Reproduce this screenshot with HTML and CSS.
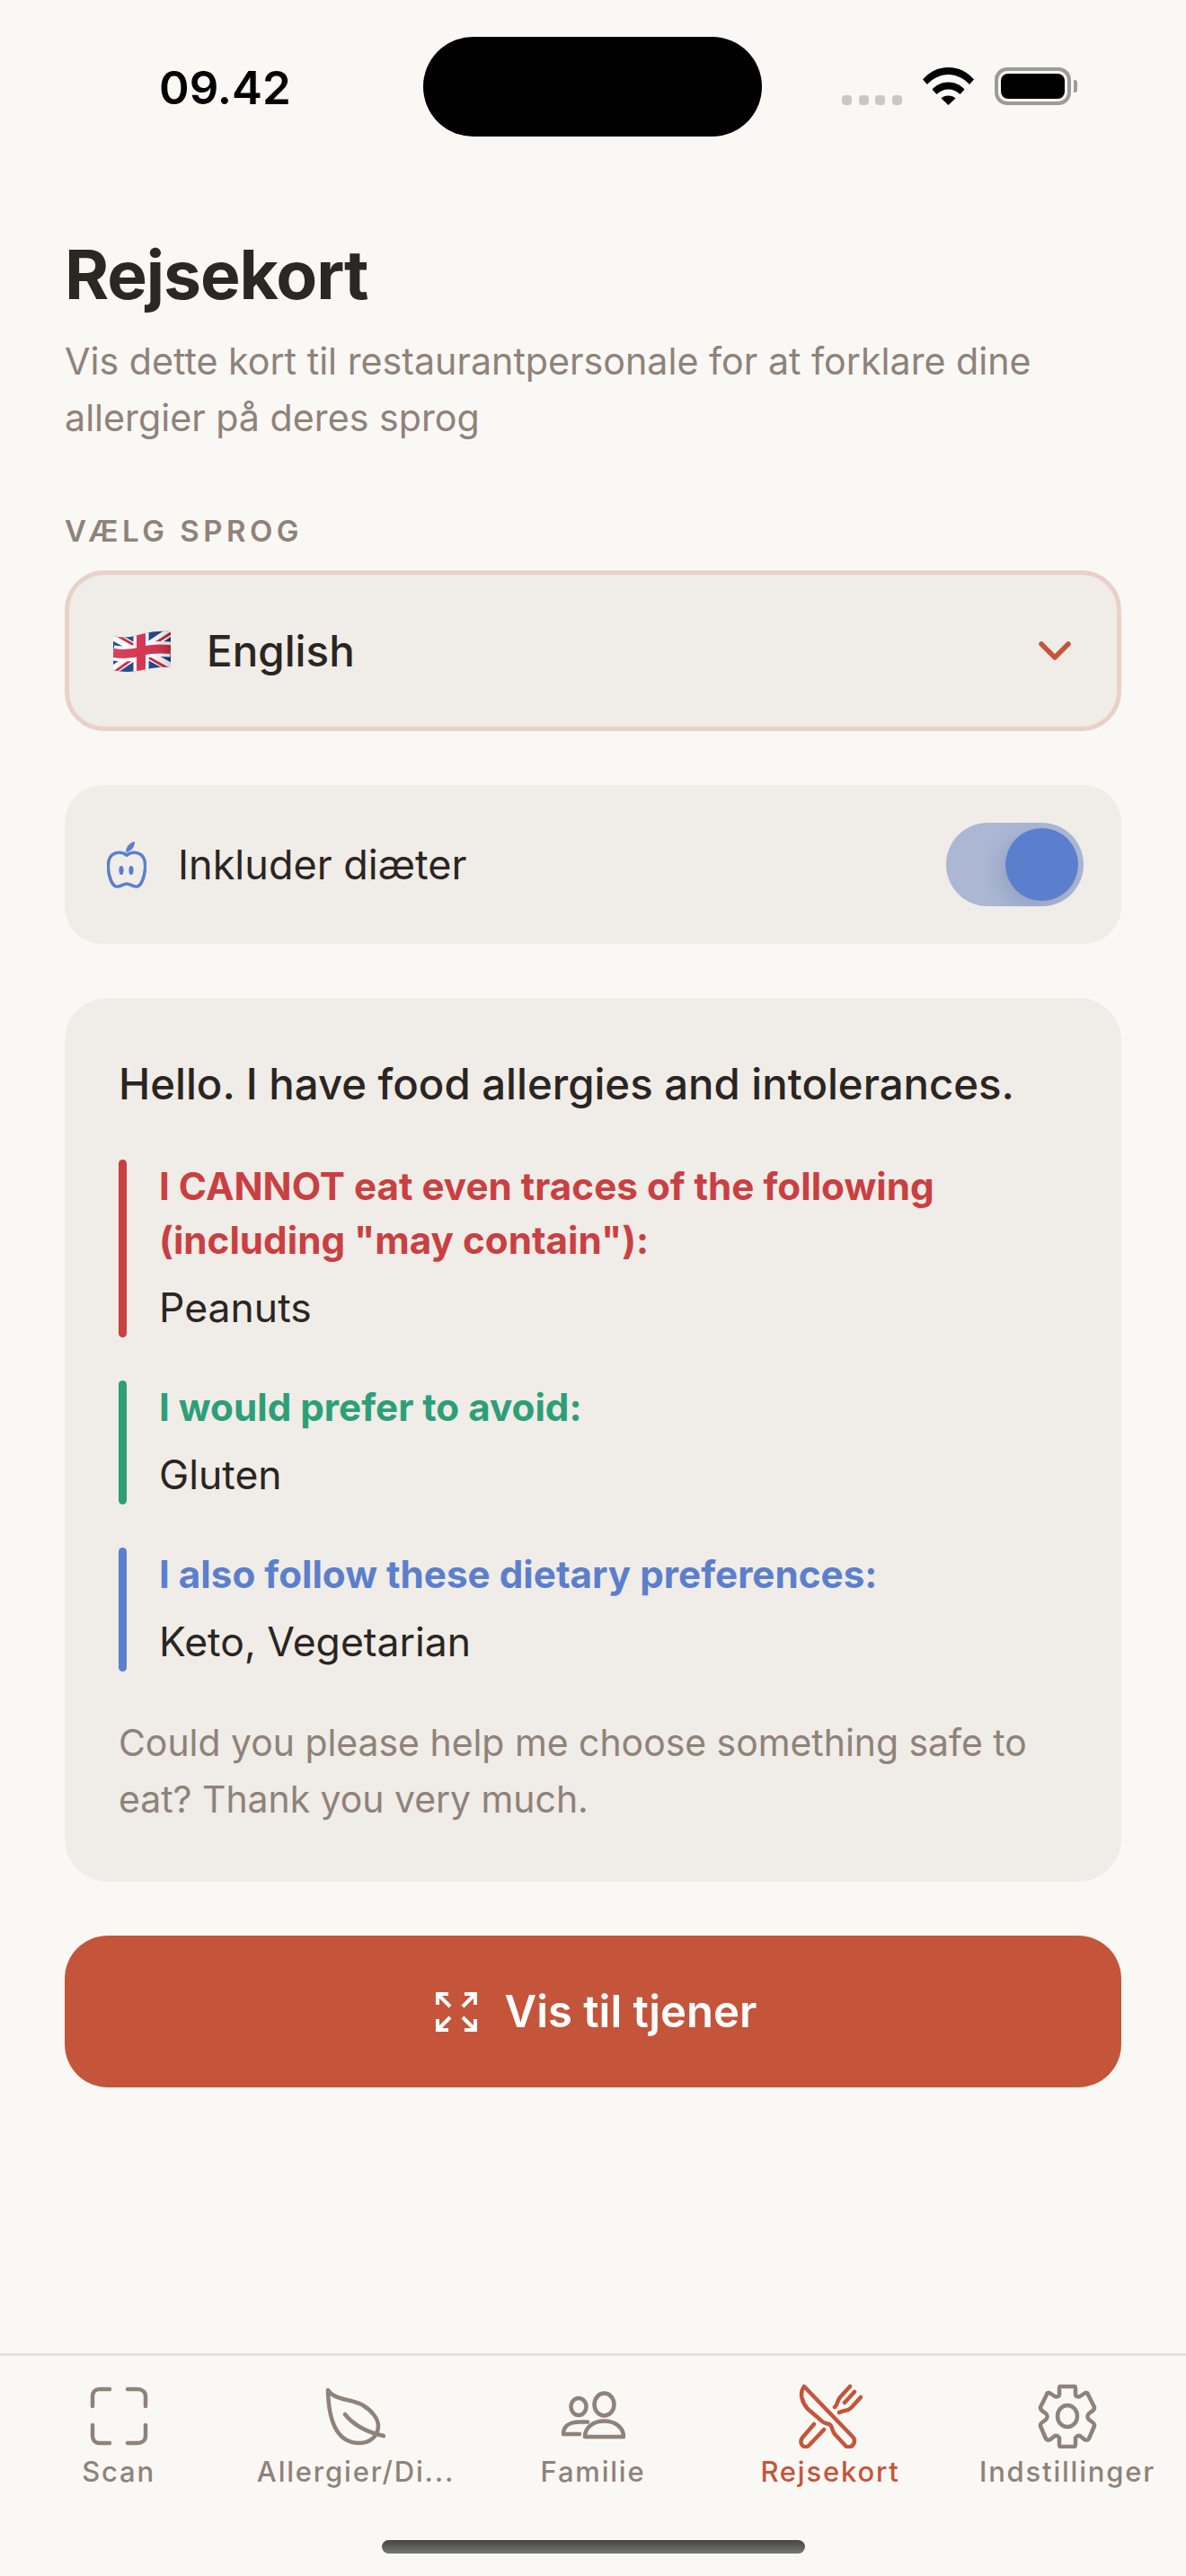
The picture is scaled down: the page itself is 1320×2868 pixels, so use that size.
FILE: index.html
```html
<!DOCTYPE html>
<html lang="da">
<head>
<meta charset="utf-8">
<title>Rejsekort</title>
<link rel="stylesheet" href="styles.css">
</head>
<body>
<div class="phone">
  <header class="status">
    <span class="time">09.42</span>
    <span class="island"></span>
    <div class="sys">
      <span class="dots"><i></i><i></i><i></i><i></i></span>
      <svg class="wifi" viewBox="0 0 57 42"><path d="M0 13.500C7.500 5 17 0 28.500 0S49.500 5 57 13.500L52 19C45.500 12 37.500 8 28.500 8S11.500 12 5 19Z"/><path d="M10.500 24.500C15 19.500 21 16.500 28.500 16.500S42 19.500 46.500 24.500L41.500 30C38 26.500 33.500 24.500 28.500 24.500S19 26.500 15.500 30Z"/><path d="M20.500 34.500C22.500 32.500 25 31.500 28.500 31.500S34.500 32.500 36.500 34.500L28.500 42Z"/></svg>
      <span class="battery"><b></b></span>
      <span class="nub"></span>
    </div>
  </header>
  <main class="content">
    <h1 class="title">Rejsekort</h1>
    <p class="sub">Vis dette kort til restaurantpersonale for at forklare dine allergier på deres sprog</p>
    <div class="label">VÆLG SPROG</div>
    <div class="select">
      <svg class="flag" viewBox="0 0 64 46">
        <defs><clipPath id="fl"><path d="M0 6C12 9 22 7 32 4S52 0 64 1V41C52 40 42 42 32 44S12 47 0 44Z"/></clipPath>
        <linearGradient id="shade" x1="0" y1="0" x2="1" y2="0"><stop offset="0" stop-color="#fff" stop-opacity=".1"/><stop offset=".55" stop-color="#fff" stop-opacity=".05"/><stop offset="1" stop-color="#000" stop-opacity=".18"/></linearGradient></defs>
        <g clip-path="url(#fl)">
          <rect width="64" height="46" fill="#1b3a86"/>
          <path d="M0 6 64 41M64 1 0 44" stroke="#fff" stroke-width="10"/>
          <path d="M0 3 30 20M64 44 34 27M64 3 36 21M0 47 28 27" stroke="#c9203a" stroke-width="3"/>
          <path d="M31 0V46" stroke="#fff" stroke-width="17"/>
          <path d="M0 25C12 27 22 26 32 23S52 20 64 21" stroke="#fff" stroke-width="17" fill="none"/>
          <path d="M31 0V46" stroke="#d42c48" stroke-width="10"/>
          <path d="M0 25C12 27 22 26 32 23S52 20 64 21" stroke="#d42c48" stroke-width="10" fill="none"/>
          <rect width="64" height="46" fill="url(#shade)"/>
        </g>
      </svg>
      <span class="lang">English</span>
      <svg class="chev" viewBox="0 0 36 21"><path d="M3 3 18 18 33 3"/></svg>
    </div>
    <div class="toggle-row">
      <svg class="apple" viewBox="0 0 44 52"><path class="st" d="M22 15C18 12 12 11 7 14 2 17 1 23 1.500 30 2 38 5 48 10 50 14 51 18 47 22 47S30 51 34 50C39 48 42 38 42.500 30 43 23 42 17 37 14 32 11 26 12 22 15Z"/><path class="fl" d="M21 12C21 6 25 1 31 0 31 6 27 11 21 12Z"/><ellipse class="fl" cx="16" cy="32" rx="2.600" ry="5"/><ellipse class="fl" cx="27" cy="32" rx="2.600" ry="5"/></svg>
      <span class="toggle-label">Inkluder diæter</span>
      <span class="switch"><span class="thumb"></span></span>
    </div>
    <section class="card">
      <p class="hello">Hello. I have food allergies and intolerances.</p>
      <div class="block red">
        <div class="head">I CANNOT eat even traces of the following (including "may contain"):</div>
        <div class="val">Peanuts</div>
      </div>
      <div class="block green">
        <div class="head">I would prefer to avoid:</div>
        <div class="val">Gluten</div>
      </div>
      <div class="block blue">
        <div class="head">I also follow these dietary preferences:</div>
        <div class="val">Keto, Vegetarian</div>
      </div>
      <p class="thanks">Could you please help me choose something safe to eat? Thank you very much.</p>
    </section>
    <button class="cta">
      <svg class="expand" viewBox="0 0 46 44"><path d="M2 14V2H14M3 3 16 16M32 2H44V14M43 3 30 16M2 30V42H14M3 41 16 28M32 42H44V30M43 41 30 28"/></svg>
      <span>Vis til tjener</span>
    </button>
  </main>
  <nav class="tabs">
    <div class="tab">
      <svg class="ic" viewBox="0 0 72 72"><path d="M7 25V14C7 9 10 6 15 6H26M46 6H57C62 6 66 9 66 14V25M7 46V58C7 63 10 66 15 66H26M46 66H57C62 66 66 63 66 58V46"/></svg>
      <span>Scan</span>
    </div>
    <div class="tab">
      <svg class="ic" viewBox="0 0 72 72"><path d="M5 7C8 12 14 15 22 17 30 19 38 20 44 24 54 30 61 39 61 47 61 58 52 66 40 66 22 66 6 54 5 7ZM24 34C32 44 44 53 67 58"/></svg>
      <span>Allergier/Di...</span>
    </div>
    <div class="tab">
      <svg class="ic" viewBox="0 0 72 72"><ellipse cx="20" cy="25.500" rx="8.500" ry="9.500"/><path d="M30 42.500H21C10 42.500 3 47 3 56H21"/><ellipse cx="48.500" cy="23" rx="11" ry="12.500"/><path d="M27 59C27 49 36 41.500 48.500 41.500S70 49 70 59Z"/></svg>
      <span>Familie</span>
    </div>
    <div class="tab active">
      <svg class="ic" viewBox="0 0 72 72"><path d="M7 3 62 60C65 66 60 72 54 70L41 56C37 51 39 47 35 45 31 44 28 44 25 40L11 28C5 21 1 11 7 3Z"/><path d="M58 3 47 15C43 20 45 23 41 26M63 9 52 21M70 15 59 27C55 31 51 29 46 32"/><path d="M18 45 5 60C1 66 6 73 12 69L29 51"/></svg>
      <span>Rejsekort</span>
    </div>
    <div class="tab">
      <svg class="ic" viewBox="0 0 72 72"><ellipse cx="36" cy="36" rx="11" ry="12"/><path d="M28 3H44C45 3 45 4 45 6V12C45 14 48 15 50 14L56 10C58 10 59 11 59 12L66 26C67 29 63 31 60 33 58 35 58 38 60 40 63 42 67 44 66 47L60 61C59 63 57 63 55 62L50 58C48 57 45 59 45 61V66C45 69 45 70 43 70H29C27 70 27 69 27 66V61C27 59 24 57 22 58L17 62C15 63 13 63 12 61L6 47C5 44 9 42 12 40 14 38 14 35 12 33 9 31 5 29 6 26L13 12C13 11 14 10 16 10L22 14C24 15 27 14 27 12V6C27 4 27 3 28 3Z"/></svg>
      <span>Indstillinger</span>
    </div>
  </nav>
  <div class="home-wrap"><span class="home"></span></div>
</div>
</body>
</html>
```
FILE: styles.css
```css
* { box-sizing: border-box; }
html, body { margin: 0; padding: 0; }
body { background: #faf8f5; font-family: Inter, "Liberation Sans", sans-serif; color: #2a2522; }
.phone { width: 1320px; height: 2868px; display: flex; flex-direction: column; overflow: hidden; }

.status { height: 196px; position: relative; flex: none; }
.time { position: absolute; left: 177px; top: 68px; font-size: 51px; line-height: 60px; font-weight: 600; color: #000; }
.island { position: absolute; left: 471px; top: 41px; width: 377px; height: 111px; border-radius: 56px; background: #000; }
.sys { position: absolute; left: 937px; top: 75px; display: flex; height: 42px; width: 262px; align-items: flex-end; }
.dots { display: flex; gap: 7.500px; margin-right: 23px; }
.dots i { width: 11px; height: 11px; border-radius: 4px; background: #c9c8c5; display: block; }
.wifi { width: 57px; height: 42px; fill: #000; margin-right: 23px; }
.battery { width: 85px; height: 42px; border: 4px solid #9b9b9b; border-radius: 14px; padding: 3px; display: block; }
.battery b { display: block; width: 100%; height: 100%; background: #000; border-radius: 8px; }
.nub { width: 4px; height: 14px; margin: 0 0 14px 3px; background: #9b9b9b; border-radius: 0 3px 3px 0; }

.content { flex: 1; padding: 0 72px; }
.title { margin: 65px 0 0; font-size: 75px; line-height: 90px; font-weight: 700; letter-spacing: -1.100px; color: #2d2723; }
.sub { margin: 20px 0 0; font-size: 41.200px; line-height: 63px; color: #8f8279; }
.label { margin-top: 73px; font-size: 33px; line-height: 42px; font-weight: 600; letter-spacing: 4.500px; color: #8f8279; }
.select { margin-top: 23px; height: 179px; border: 5px solid #e8d1c8; border-radius: 44px; background: #f0ece7; display: flex; align-items: center; padding: 0 51px 0 49px; }
.flag { width: 64px; height: 46px; flex: none; }
.lang { margin-left: 40px; flex: 1; font-size: 47.500px; font-weight: 500; }
.chev { width: 36px; height: 21px; fill: none; stroke: #c5553a; stroke-width: 5.500; stroke-linecap: round; stroke-linejoin: round; }

.toggle-row { margin-top: 60px; height: 177px; background: #f0ece7; border-radius: 42px; display: flex; align-items: center; padding: 0 42px 0 47px; }
.apple { width: 44px; height: 52px; flex: none; }
.apple .st { fill: none; stroke: #5b7fcd; stroke-width: 3.500; }
.apple .fl { fill: #5b7fcd; }
.toggle-label { margin-left: 35px; flex: 1; font-size: 45px; font-weight: 400; }
.switch { width: 153px; height: 93px; border-radius: 47px; background: #abb7d3; display: block; position: relative; flex: none; overflow: hidden; }
.thumb { position: absolute; left: 66px; top: 6px; width: 81px; height: 81px; border-radius: 50%; background: #5b7fcd; box-shadow: -8px 8px 20px rgba(70,90,140,.2); }

.card { margin-top: 60px; height: 984px; background: #f0ece7; border-radius: 48px; padding: 60px 60px 0; }
.hello { margin: 0; font-size: 47.300px; line-height: 72px; font-weight: 500; color: #2a2522; }
.block { position: relative; margin-top: 48px; padding-left: 45px; }
.block::before { content: ""; position: absolute; left: 0; top: 0; bottom: 0; width: 9px; border-radius: 5px; background: currentColor; }
.head { font-size: 42.200px; line-height: 60px; font-weight: 650; }
.val { margin-top: 12px; font-size: 44.500px; line-height: 66px; color: #2a2522; }
.red { color: #c93f42; }
.green { color: #2c9f78; }
.blue { color: #5b7fcd; }
.thanks { margin: 48px 0 0; font-size: 40.900px; line-height: 63px; color: #8f8279; }

.cta { margin-top: 60px; width: 100%; height: 169px; border: 0; border-radius: 48px; background: #c5553a; color: #fff; display: flex; align-items: center; justify-content: center; gap: 31px; font-family: inherit; font-size: 49px; font-weight: 600; padding: 0 0 0 7px; }
.expand { width: 46px; height: 44px; fill: none; stroke: #fff; stroke-width: 4; }

.tabs { flex: none; height: 146px; border-top: 3px solid #e4e1da; display: grid; grid-template-columns: repeat(5, 264px); padding-top: 31px; }
.tab { display: flex; flex-direction: column; align-items: center; color: #8f8279; font-size: 31px; line-height: 40px; letter-spacing: 1.800px; font-weight: 450; white-space: nowrap; }
.tab .ic { width: 72px; height: 72px; fill: none; stroke: #8f8279; stroke-width: 4.500; stroke-linecap: round; stroke-linejoin: round; margin-bottom: 6px; flex: none; }
.tab.active { color: #c5553a; }
.tab.active .ic { stroke: #c5553a; }
.home-wrap { flex: none; height: 102px; display: flex; justify-content: center; padding-top: 62px; }
.home { width: 471px; height: 15px; border-radius: 8px; background: linear-gradient(#444, #777); display: block; }
```
